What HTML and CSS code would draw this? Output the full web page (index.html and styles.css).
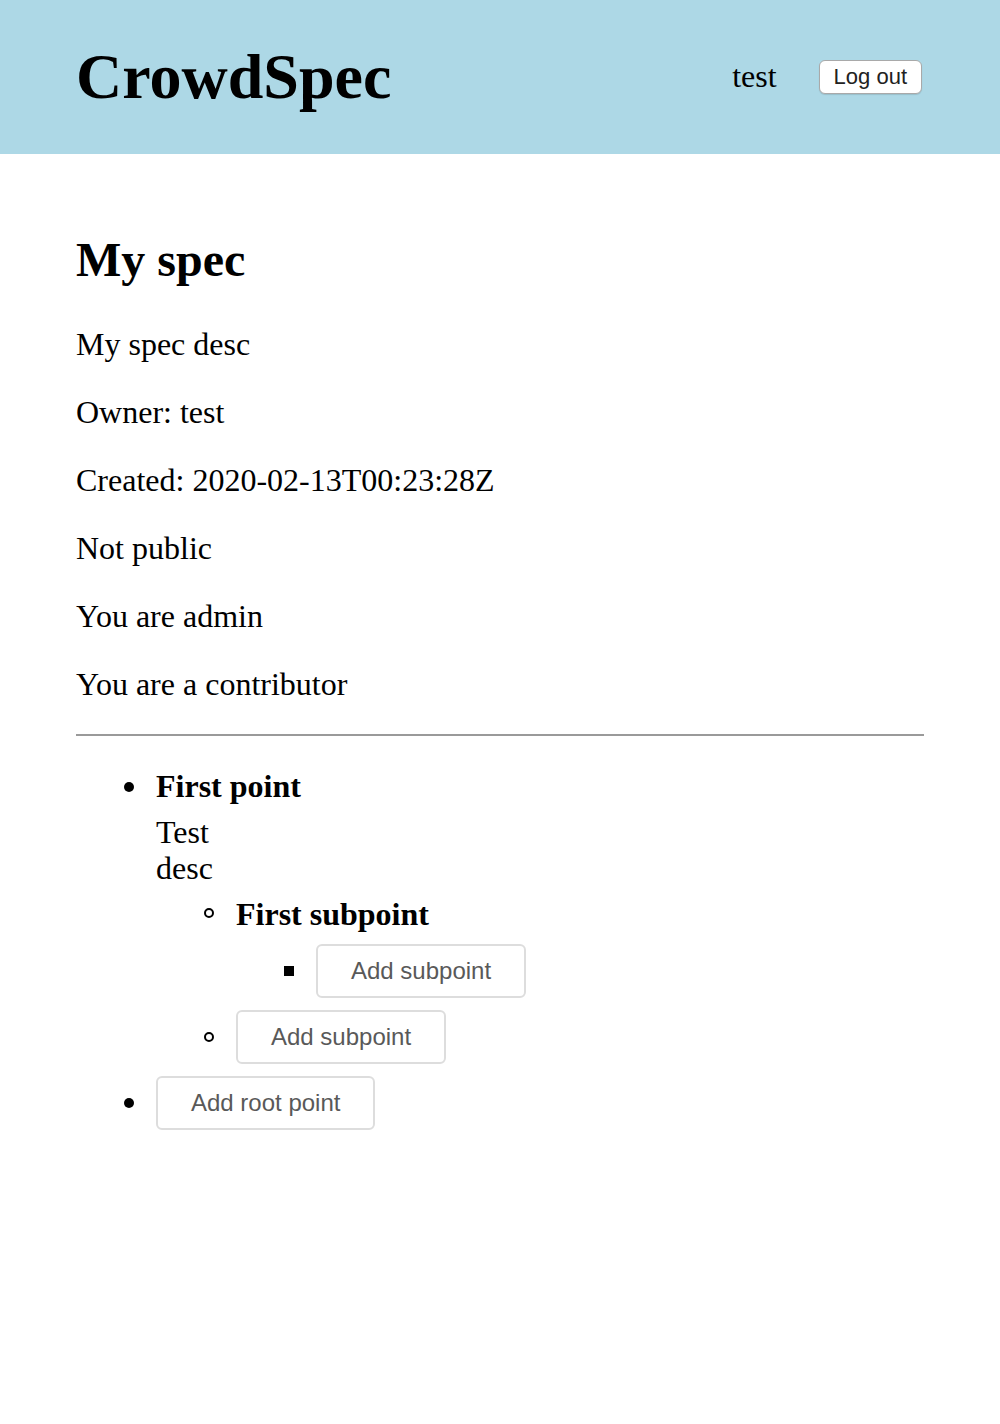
FILE: index.html
```html
<!DOCTYPE html>
<html>
<head>
<meta charset="utf-8">
<title>CrowdSpec</title>
<link rel="stylesheet" href="styles.css">
</head>
<body>
<header class="topbar">
  <h1 class="logo">CrowdSpec</h1>
  <div class="user">
    <span class="username">test</span>
    <button class="logout">Log out</button>
  </div>
</header>
<main class="content">
  <h2 class="spec-title">My spec</h2>
  <p class="info">My spec desc</p>
  <p class="info">Owner: test</p>
  <p class="info">Created: 2020-02-13T00:23:28Z</p>
  <p class="info">Not public</p>
  <p class="info">You are admin</p>
  <p class="info">You are a contributor</p>
  <hr class="divider">
  <ul class="points level-1">
    <li class="point">
      <div class="point-title">First point</div>
      <div class="point-desc">Test<br>desc</div>
      <ul class="points level-2">
        <li class="point">
          <div class="point-title">First subpoint</div>
          <ul class="points level-3">
            <li class="add-item"><button class="add-btn">Add subpoint</button></li>
          </ul>
        </li>
        <li class="add-item"><button class="add-btn">Add subpoint</button></li>
      </ul>
    </li>
    <li class="add-item"><button class="add-btn">Add root point</button></li>
  </ul>
</main>
</body>
</html>
```

FILE: styles.css
```css
html, body {
  margin: 0;
  padding: 0;
  background: #ffffff;
}

body {
  font-family: "Liberation Serif", "Times New Roman", serif;
  font-size: 32px;
  line-height: 36px;
  color: #000;
}

.topbar {
  height: 154px;
  box-sizing: border-box;
  background: #add8e6;
  padding: 0 78px 0 76px;
  display: flex;
  align-items: center;
  justify-content: space-between;
}

.logo {
  margin: 0;
  font-size: 64px;
  line-height: 72px;
  font-weight: bold;
}

.user {
  display: flex;
  align-items: center;
  gap: 42px;
}

.username {
  font-size: 32px;
  line-height: 36px;
  position: relative;
  top: -1px;
}

.logout {
  font-family: "Liberation Sans", Arial, sans-serif;
  font-size: 22px;
  line-height: 26px;
  color: #222;
  background: #fff;
  border: 1px solid #a9a9a9;
  border-radius: 6px;
  padding: 3px 14px;
  box-shadow: 0 1px 1px rgba(0, 0, 0, 0.12);
}

.content {
  padding: 39px 76px 0 76px;
}

.spec-title {
  font-size: 48px;
  line-height: 53px;
  font-weight: bold;
  margin: 40px 0;
}

.info {
  margin: 32px 0;
}

.divider {
  border: 0;
  border-top: 2px solid #9a9a9a;
  margin: 16px 0;
  height: 0;
}

.points {
  margin: 0;
  padding-left: 80px;
  list-style: none;
}

.level-1 {
  margin: 32px 0;
}

.point,
.add-item {
  position: relative;
}

.point::before,
.add-item::before {
  content: "";
  position: absolute;
  left: -32px;
  top: 14px;
  width: 10px;
  height: 10px;
  box-sizing: border-box;
  background: #000;
  border-radius: 50%;
}

.add-item::before {
  top: 22px;
}

.level-2 > li::before {
  top: 12px;
  background: transparent;
  border: 2px solid #000;
}

.level-2 > .add-item::before {
  top: 22px;
}

.level-3 > li::before {
  border-radius: 0;
  background: #000;
  border: 0;
}

.point-title {
  font-weight: bold;
  margin-bottom: 10px;
}

.point-desc {
  margin-bottom: 10px;
}

.add-btn {
  display: block;
  font-family: "Liberation Sans", Arial, sans-serif;
  font-size: 24px;
  line-height: 28px;
  color: #595959;
  background: #fff;
  border: 2px solid #dddddd;
  border-radius: 6px;
  padding: 11px 33px;
  margin: 12px 0;
}
```
